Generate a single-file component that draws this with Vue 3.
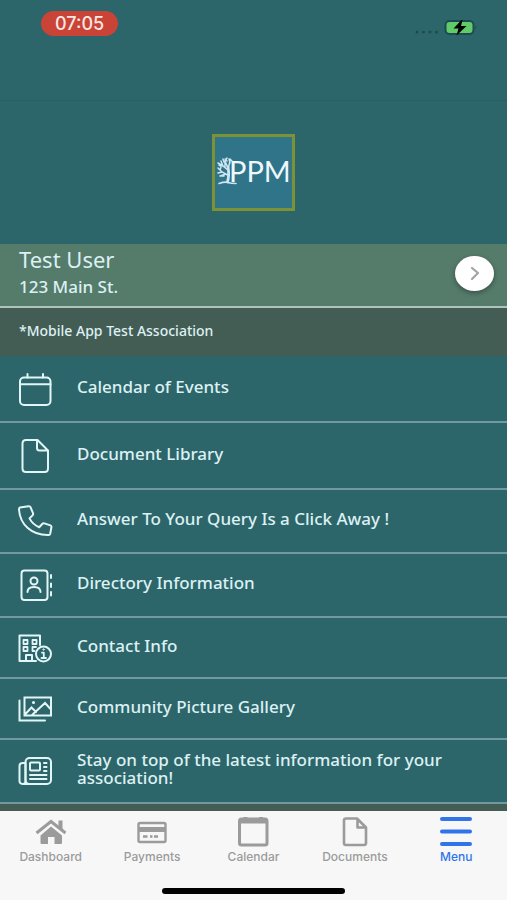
<script setup>
import { ref } from 'vue'

const active = ref('menu')

const items = [
  { id: 'calendar', label: 'Calendar of Events', size: 'tall' },
  { id: 'document', label: 'Document Library', size: 'tall' },
  { id: 'phone', label: 'Answer To Your Query Is a Click Away !', size: 'medium' },
  { id: 'directory', label: 'Directory Information', size: 'medium' },
  { id: 'contact', label: 'Contact Info', size: 'short' },
  { id: 'gallery', label: 'Community Picture Gallery', size: 'short' },
  { id: 'news', label: 'Stay on top of the latest information for your association!', size: 'medium' }
]

const tabs = [
  { id: 'dashboard', label: 'Dashboard' },
  { id: 'payments', label: 'Payments' },
  { id: 'calendar', label: 'Calendar' },
  { id: 'documents', label: 'Documents' },
  { id: 'menu', label: 'Menu' }
]
</script>

<template>
  <div class="screen">
    <header class="status">
      <span class="clock">07:05</span>
      <svg class="power" viewBox="0 0 64 18" aria-hidden="true">
        <g fill="#1d4b50">
          <circle cx="3" cy="14" r="1.5" /><circle cx="9.500" cy="14" r="1.5" />
          <circle cx="16" cy="14" r="1.5" /><circle cx="22.500" cy="14" r="1.5" />
          <path d="M61.500 7.500q2 1.500 0 4z" />
        </g>
        <rect x="31.500" y="3" width="28" height="13" rx="4" fill="#5fcb69" stroke="#1d4b50" stroke-width="2" />
        <path d="M47.500 2L39.500 10.500h5L42.500 17.500l10-9.500h-5.500l1.500-6z" fill="#000" />
      </svg>
    </header>

    <main class="content">
      <div class="brand">
        <div class="logo">
          <svg viewBox="0 0 77 71" role="img" aria-label="PPM">
            <g fill="none" stroke="#cfe6f2" stroke-linecap="round">
              <path d="M12.500 45q2-7 .5-15" stroke-width="2.800" />
              <path d="M4 46.500q6-2 9-1t8 1" stroke-width="1.600" />
              <path d="M12.500 38L7 35l-4-4M13 33L8 29l-2-5M13 31l-3-7 2-3M13 32l2-8M7 35l-4 1M8 29l-5-3M10 30V24M5 33l1-3M12 24l-2-2M15 26l-1-4M11 37l-6 2M9 39H6M4 28l2 1M8 22l1 3M15 22l2 2" stroke-width="1.500" />
            </g>
            <text class="wordmark" x="14" y="45">PPM</text>
          </svg>
        </div>
      </div>

      <section class="user">
        <div class="person">
          <h1>Test User</h1>
          <p>123 Main St.</p>
        </div>
        <button class="next" type="button" aria-label="Open profile">
          <svg viewBox="0 0 12 16" aria-hidden="true">
            <path d="M3 3l6 5-6 6" fill="none" stroke="#a3a3a3" stroke-width="2.200" stroke-linecap="round" stroke-linejoin="round" />
          </svg>
        </button>
      </section>
      <p class="association">*Mobile App Test Association</p>

      <nav class="menu" aria-label="Main menu">
        <a v-for="item in items" :key="item.id" href="#" class="row" :class="item.size" @click.prevent>
          <svg class="icon" viewBox="0 0 36 36" aria-hidden="true">
            <g v-if="item.id === 'calendar'">
              <rect x="3" y="6.500" width="30.500" height="27.500" rx="4" />
              <path d="M3 13.300h30.500M10.500 3v3.500M26 3v3.500" />
            </g>
            <g v-else-if="item.id === 'document'">
              <path d="M20.500 2H9Q5.500 2 5.500 5.500v25Q5.500 34 9 34h18.500q3.500 0 3.500-3.500V12.500zM20 2.500V10q0 2.500 2.500 2.500h8" />
            </g>
            <g v-else-if="item.id === 'phone'">
              <path d="M3 4.500l8.500-1.300q1.500-.2 2 1l2.500 6q.5 1.300-.5 2.200l-3 3q3.300 6.300 9.700 8.800l3-3.200q.9-1 2.200-.6l6 2q1.300.5 1 1.900l-1.200 6.500q-.3 1.200-1.500 1.200C14.500 32.500 3 21.500 2 6.500q-.1-1.600 1-2z" />
            </g>
            <g v-else-if="item.id === 'directory'">
              <rect x="4.500" y="3.500" width="26" height="29.500" rx="3" />
              <circle cx="17" cy="14" r="3.500" />
              <path d="M10.500 25q0-5 6.500-5t6.500 5M34 8v3M34 16.500v3.500M34 25v3.500" />
            </g>
            <g v-else-if="item.id === 'contact'">
              <path d="M19 31H2.500V5.500h20.500V15M9 31v-6h6v6" />
              <path d="M6.500 10h4v4h-4zM15.500 10h4v4h-4zM6.500 17h4v4h-4zM19 17h-3.500v4h2" stroke-width="1.800" />
              <circle cx="26.500" cy="24" r="7.500" />
              <path d="M25 22.700h1.800v5M24.500 28h4.500" stroke-width="1.800" />
              <circle cx="26.500" cy="19.500" r=".7" stroke-width="1" />
            </g>
            <g v-else-if="item.id === 'gallery'">
              <path d="M7.500 6.500h26.500v18H7.500zM2.500 9.500v20H28M8 23.500l6.500-7 4.500 4.500M15 24l13-12 6 6.500" stroke-linejoin="miter" />
              <circle cx="16.500" cy="11.500" r=".8" stroke-width="1.500" />
            </g>
            <g v-else>
              <rect x="8.500" y="5" width="25.500" height="26" rx="4" />
              <path d="M8.500 10H5.500Q2.500 10 2.500 13v15q0 3 4 3H29M8.500 10v18q0 3-2.500 3" />
              <rect x="13" y="9.500" width="10" height="8" rx="1" />
              <path d="M27 10h2.500M27 14h2.500M27 18h2.500M13 22h16.500M13 26h16.500" />
            </g>
          </svg>
          <span class="label">{{ item.label }}</span>
        </a>
      </nav>
    </main>

    <footer class="dock">
      <nav class="tabs" aria-label="Tabs">
        <button v-for="tab in tabs" :key="tab.id" type="button" class="tab" :class="{ active: active === tab.id }" @click="active = tab.id">
          <svg class="glyph" viewBox="0 0 32 32" aria-hidden="true">
            <g v-if="tab.id === 'dashboard'" fill="currentColor">
              <path d="M16 11.500L27 20.500V28q0 1-1 1h-6.500v-7h-6.500v7H6.500q-1 0-1-1v-7.500z" />
              <path d="M1.500 18L16 6.500l14.500 11.500" fill="none" stroke="currentColor" stroke-width="3" />
              <path d="M23.500 5.500h4v10l-4-3z" />
            </g>
            <g v-else-if="tab.id === 'payments'" fill="none" stroke="currentColor">
              <rect x="2.500" y="8" width="27" height="19" rx="1.500" stroke-width="2.400" />
              <path d="M2.500 14.500h27" stroke-width="5" />
              <path d="M7 21.500h4.500M14 21.500h2.500M18 21.500h4" stroke-width="2.600" />
            </g>
            <g v-else-if="tab.id === 'calendar'" fill="none" stroke="currentColor">
              <rect x="2.500" y="4" width="27.500" height="26" rx="2" stroke-width="3" />
              <path d="M2.500 6h27.500" stroke-width="5" />
              <path d="M8.500 2v3M24 2v3" stroke-width="4" />
            </g>
            <g v-else-if="tab.id === 'documents'" fill="none" stroke="currentColor" stroke-width="2.600" stroke-linejoin="round">
              <path d="M18 3.500H7Q5 3.500 5 5.500v22.500q0 2 2 2h18q2 0 2-2V12.500zM18.500 4v8.500h8.500" />
            </g>
            <path v-else d="M2 4h28M2 16.500h28M2 29h28" fill="none" stroke="currentColor" stroke-width="4" stroke-linecap="round" />
          </svg>
          <span>{{ tab.label }}</span>
        </button>
      </nav>
      <div class="indicator"></div>
    </footer>
  </div>
</template>

<style>
body {
  margin: 0;
}
</style>

<style scoped>
.screen {
  display: flex;
  flex-direction: column;
  min-height: 100vh;
  background: #2d666a;
  color: #dcf1f3;
  font-family: "Noto Sans", "Open Sans", sans-serif;
}
h1,
p {
  margin: 0;
  font-weight: 400;
}
.status {
  display: flex;
  justify-content: space-between;
  align-items: flex-start;
  box-sizing: border-box;
  height: 101px;
  padding: 11px 29px 0 41px;
  border-bottom: 1px solid #295d61;
}
.clock {
  padding: 0 14px;
  border-radius: 13px;
  background: #c94337;
  color: #fbe6e3;
  font: 500 18px/25px Inter, sans-serif;
}
.power {
  width: 64px;
  height: 18px;
  margin-top: 7px;
}
.content {
  flex: 1;
  background: #445d54;
}
.brand {
  display: flex;
  justify-content: center;
  padding: 33px 0;
  background: #2d666a;
}
.logo {
  border: 3px solid #7b9239;
  background: #2f7489;
}
.logo svg {
  display: block;
  width: 77px;
  height: 71px;
}
.wordmark {
  font-family: Lato, sans-serif;
  font-size: 29px;
  fill: #edf7fc;
}
.user {
  display: flex;
  justify-content: space-between;
  align-items: center;
  box-sizing: border-box;
  min-height: 64px;
  padding: 0 13px 4px 19px;
  border-bottom: 2px solid #b0c2bb;
  background: #557b6b;
}
h1 {
  font-size: 22px;
  line-height: 28px;
}
.person p {
  font-size: 17px;
  font-weight: 500;
  line-height: 28px;
}
.next {
  display: grid;
  place-items: center;
  width: 39px;
  height: 35px;
  padding: 0;
  border: 0;
  border-radius: 50%;
  background: #fff;
  box-shadow: 0 2px 5px rgb(0 0 0 / 35%);
}
.next svg {
  width: 12px;
  height: 16px;
}
.association {
  padding: 0 19px 2px;
  font-size: 14px;
  font-weight: 500;
  line-height: 46px;
}
.menu {
  background: #2d666a;
}
.row {
  display: flex;
  align-items: center;
  gap: 24px;
  box-sizing: border-box;
  padding: 0 17px;
  border-bottom: 2px solid #7299a0;
  color: inherit;
  text-decoration: none;
}
.tall {
  min-height: 67px;
}
.medium {
  min-height: 64px;
}
.short {
  min-height: 61px;
}
.icon {
  flex: none;
  width: 36px;
  height: 36px;
  fill: none;
  stroke: #e2f6f7;
  stroke-width: 2;
  stroke-linecap: round;
  stroke-linejoin: round;
}
.label {
  max-width: 384px;
  padding-bottom: 4px;
  font-size: 17px;
  font-weight: 500;
  line-height: 18px;
}
.dock {
  display: flex;
  flex-direction: column;
  align-items: center;
  justify-content: space-between;
  box-sizing: border-box;
  min-height: 89px;
  padding: 4px 0 6px;
  background: #f7f7f7;
}
.tabs {
  display: grid;
  grid-template-columns: repeat(5, 1fr);
  width: 100%;
}
.tab {
  display: flex;
  flex-direction: column;
  align-items: center;
  gap: 3px;
  padding: 0;
  border: 0;
  background: none;
  color: #9b9b9b;
  font: 500 12px/14px Inter, sans-serif;
}
.tab.active {
  color: #3174ea;
}
.glyph {
  width: 32px;
  height: 32px;
}
.indicator {
  width: 36%;
  height: 6px;
  border-radius: 3px;
  background: #000;
}
</style>
